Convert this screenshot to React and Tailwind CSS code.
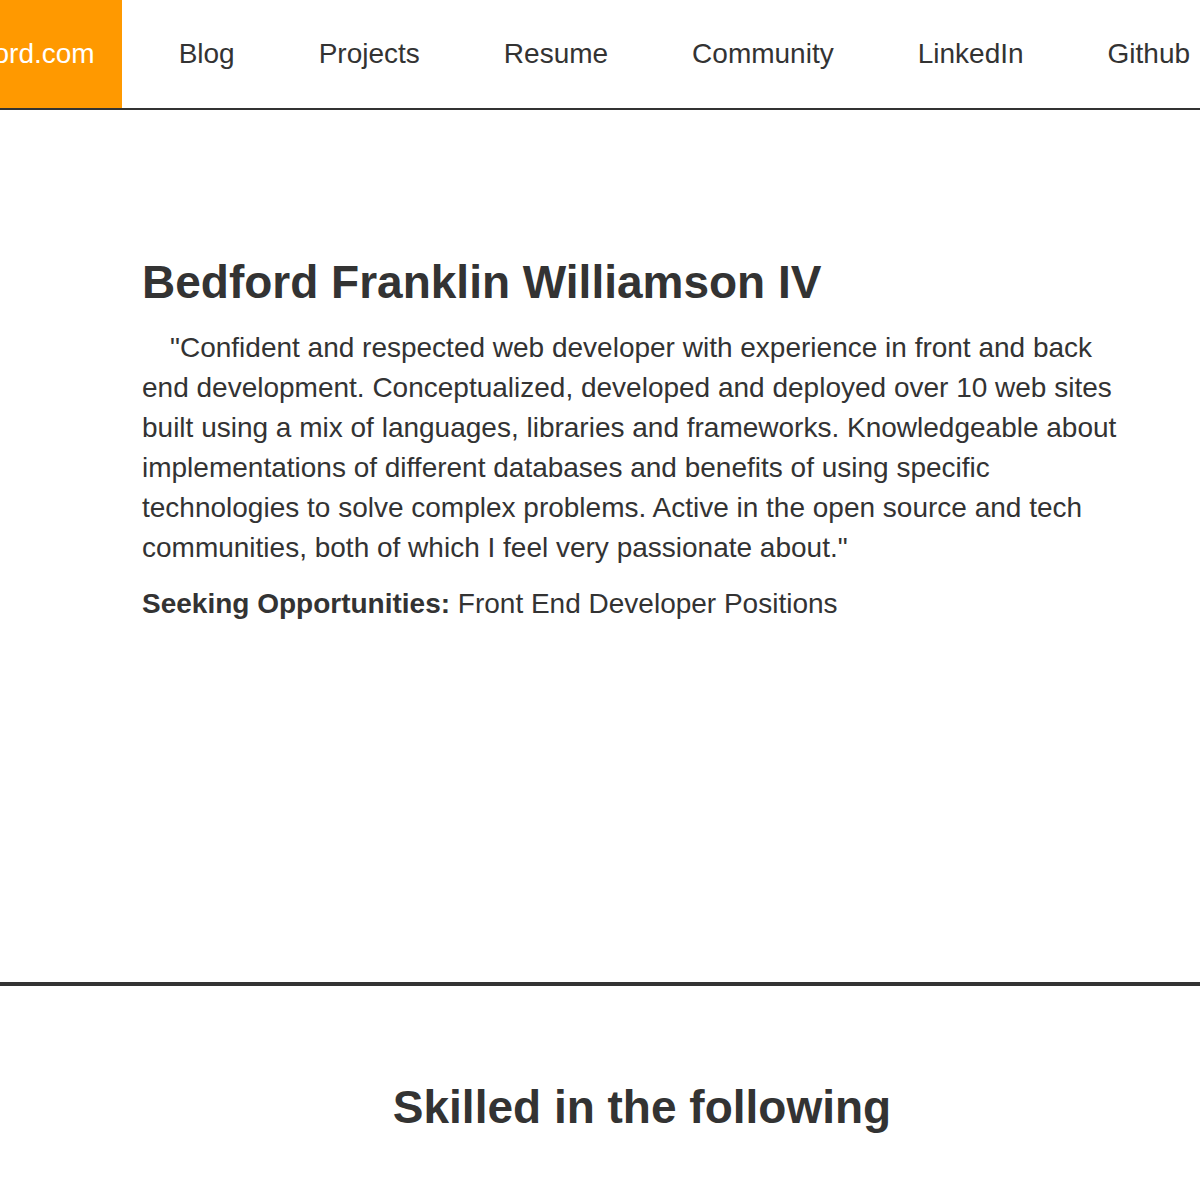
export default function App() {
  const links = ["Blog", "Projects", "Resume", "Community", "LinkedIn", "Github"];

  return (
    <div
      className="min-h-[1200px] w-full overflow-hidden bg-white text-[#333]"
      style={{ fontFamily: '"Liberation Sans", Arial, Helvetica, sans-serif' }}
    >
      <nav className="flex h-[110px] items-stretch whitespace-nowrap border-b-2 border-[#333]">
        <div className="ml-[-88px] flex shrink-0 items-center bg-[#ff9900] px-[27px] text-[28px] text-white">
          bedford.com
        </div>
        <ul className="ml-[57px] flex shrink-0 items-center gap-[84px] text-[28px]">
          {links.map((l) => (
            <li key={l}>
              <a href="#">{l}</a>
            </li>
          ))}
        </ul>
      </nav>

      <section className="h-[876px] border-b-4 border-[#333]">
        <div className="ml-[142px] w-[1000px] pt-[146px]">
          <h1 className="text-[46px] font-bold leading-[52px]">
            Bedford Franklin Williamson IV
          </h1>
          <p className="mt-[20px] indent-[28px] text-[28px] leading-[40px]">
            "Confident and respected web developer with experience in front and back end
            development. Conceptualized, developed and deployed over 10 web sites built using a
            mix of languages, libraries and frameworks. Knowledgeable about implementations of
            different databases and benefits of using specific technologies to solve complex
            problems. Active in the open source and tech communities, both of which I feel very
            passionate about."
          </p>
          <p className="mt-[16px] text-[28px] leading-[40px]">
            <strong className="font-bold">Seeking Opportunities:</strong> Front End Developer
            Positions
          </p>
        </div>
      </section>

      <section className="ml-[142px] w-[1000px] pt-[95px]">
        <h2 className="text-center text-[46px] font-bold leading-[52px]">
          Skilled in the following
        </h2>
      </section>
    </div>
  );
}
